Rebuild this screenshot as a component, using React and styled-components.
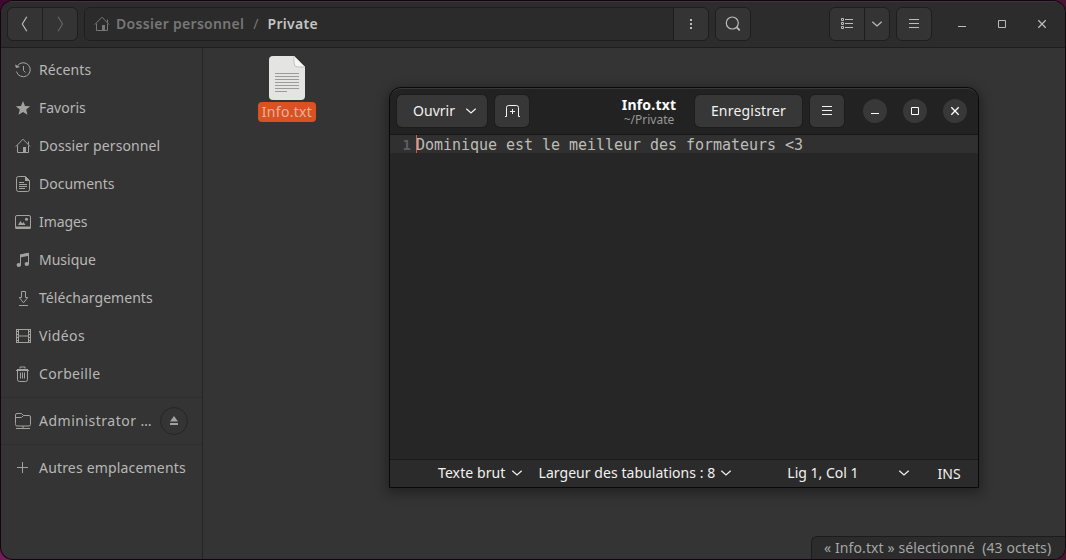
import React from "react";
import styled, { createGlobalStyle } from "styled-components";

const Global = createGlobalStyle`
  * { box-sizing: border-box; }
  html, body { margin: 0; height: 100%; overflow: hidden; }
  body { font-family: "Noto Sans", "Open Sans", sans-serif; font-size: 14px; }
`;

const Desktop = styled.div`
  width: 1066px;
  height: 560px;
  overflow: hidden;
  padding: 1px;
  background: linear-gradient(100deg, #3c0a30 0%, #7a2160 10%, #4a1238 50%, #481530 100%);
`;

const FilesWindow = styled.div`
  position: relative;
  display: flex;
  flex-direction: column;
  height: 558px;
  border-radius: 12px;
  overflow: hidden;
  background: #343434;
  color: #b4b4b2;
  box-shadow: 0 0 0 1px #17030f;
`;

const FilesHeader = styled.header`
  display: flex;
  align-items: flex-start;
  height: 47px;
  padding: 6px 11px 0 6px;
  background: #2c2c2c;
  border-top: 1px solid #383838;
  border-bottom: 1px solid #1d1d1d;
`;

const Group = styled.div`
  display: flex;
  height: 34px;
  margin-top: -1px;
  margin-right: ${(p) => p.$gap || 6}px;
  border: 1px solid #1e1e1e;
  border-radius: 6px;
  overflow: hidden;
  background: #343434;
`;

const Cell = styled.div`
  display: flex;
  align-items: center;
  justify-content: center;
  width: ${(p) => p.$w}px;
  color: ${(p) => (p.$dim ? "#646464" : "#bcbcba")};
  & + & { border-left: 1px solid #1e1e1e; }
`;

const PathBar = styled.div`
  display: flex;
  align-items: center;
  width: 589px;
  padding-left: 9px;
  background: #2b2b2b;
  border-right: 1px solid #1e1e1e;
  color: #777775;
  font-weight: 600;
`;

const Label = styled.span`
  white-space: pre;
  letter-spacing: ${(p) => p.$ls || 0}px;
  margin-left: ${(p) => p.$ml || 0}px;
  color: ${(p) => p.$color || "inherit"};
  font-weight: ${(p) => p.$weight || "inherit"};
  line-height: 20px;
`;

const Spacer = styled.div`
  flex: 1;
`;

const WindowButtons = styled.div`
  display: flex;
  gap: 16px;
  margin-top: ${(p) => p.$top || 0}px;
`;

const WindowButton = styled.div`
  display: flex;
  align-items: center;
  justify-content: center;
  width: 24px;
  height: 24px;
  border-radius: 50%;
  background: ${(p) => (p.$filled ? "#383838" : "transparent")};
  color: ${(p) => (p.$filled ? "#fff" : "#bcbcba")};
`;

const FilesBody = styled.div`
  display: flex;
  flex: 1;
`;

const Sidebar = styled.nav`
  width: 202px;
  padding-top: 3px;
  border-right: 1px solid #242424;
`;

const Place = styled.div`
  display: flex;
  align-items: center;
  height: 38px;
  padding: 0 14px;
  color: #a2a2a0;
`;

const Rule = styled.div`
  height: 1px;
  margin: 4px 0;
  background: #2e2e2e;
`;

const Eject = styled.div`
  display: flex;
  align-items: center;
  justify-content: center;
  width: 28px;
  height: 28px;
  margin-left: auto;
  border: 1px solid #252525;
  border-radius: 50%;
`;

const Content = styled.main`
  flex: 1;
  padding: 8px 0 0 55px;
`;

const FileItem = styled.div`
  display: flex;
  flex-direction: column;
  align-items: center;
  width: 58px;
`;

const FileName = styled.div`
  width: 58px;
  height: 20px;
  margin-top: 1px;
  border-radius: 4px;
  background: #dc5121;
  color: #e3b3a0;
  text-align: center;
  line-height: 20px;
  letter-spacing: 0.3px;
`;

const Floating = styled.div`
  position: absolute;
  right: 0;
  bottom: 0;
  width: 254px;
  height: 23px;
  padding: 1px 0 0 12px;
  border: solid #1c1c1c;
  border-width: 1px 0 0 1px;
  border-radius: 6px 0 0 0;
  background: #2c2c2c;
  color: #a6a6a4;
`;

const Editor = styled.section`
  position: absolute;
  left: 388px;
  top: 86px;
  display: flex;
  flex-direction: column;
  width: 590px;
  height: 401px;
  border: 1px solid #090909;
  border-radius: 12px 12px 0 0;
  overflow: hidden;
  background: #262626;
  color: #f2f2f0;
  box-shadow: 0 3px 12px 2px rgba(0, 0, 0, 0.36);
`;

const EditorHeader = styled.header`
  display: flex;
  align-items: center;
  height: 47px;
  padding: 0 11px 1px 7px;
  background: #222;
  border-top: 1px solid #373737;
  border-bottom: 1px solid #161616;
  border-radius: 11px 11px 0 0;
`;

const Button = styled.div`
  display: flex;
  align-items: center;
  justify-content: center;
  width: ${(p) => p.$w}px;
  height: 32px;
  margin-right: ${(p) => p.$gap || 8}px;
  padding-left: ${(p) => p.$pad || 0}px;
  border-radius: 5px;
  background: #373737;
  box-shadow: 0 0 0 1px #1c1c1c;
`;

const Title = styled.div`
  display: flex;
  flex-direction: column;
  align-items: center;
  flex: 1;
  padding-left: 73px;
`;

const TitleName = styled.div`
  font-weight: 700;
  line-height: 17px;
  color: #fff;
  letter-spacing: 0.2px;
`;

const TitlePath = styled.div`
  font-size: 12px;
  line-height: 14px;
  color: #989896;
`;

const TextArea = styled.div`
  flex: 1;
  font-family: "DejaVu Sans Mono", monospace;
  font-size: 15px;
`;

const Line = styled.div`
  display: flex;
  height: 18px;
  line-height: 20px;
  background: #303030;
  color: #bdbdb8;
  letter-spacing: -0.03px;
`;

const LineNumber = styled.div`
  width: 26px;
  padding-right: 5px;
  text-align: right;
  font-weight: 700;
  font-size: 14px;
  color: #5e5c64;
`;

const Caret = styled.span`
  width: 1px;
  margin-right: -1px;
  background: #e95420;
`;

const EditorStatus = styled.footer`
  display: flex;
  align-items: center;
  height: 28px;
  padding: 0 0 2px 48px;
  border-top: 1px solid #1a1a1a;
  background: #2b2b2b;
`;

const InsertMode = styled(Label)`
  padding-top: 2px;
`;

const Svg = ({ w = 16, h = 16, ml = 0, children }) => (
  <svg width={w} height={h} viewBox={`0 0 ${w} ${h}`} fill="none" stroke="currentColor" strokeWidth="1" style={{ flex: "none", marginLeft: ml }}>
    {children}
  </svg>
);

const Home = () => (
  <Svg>
    <path d="M.8 8.6 8 1.2l7.2 7.4M2.5 7.5v7h11v-7M13.5 6.5v-3" />
    <path d="M8 9h3v6H8z" fill="currentColor" stroke="none" />
  </Svg>
);
const Down = ({ ml }) => (
  <Svg w={12} h={8} ml={ml}><path d="M1.3 1.7 6 6l4.7-4.3" strokeWidth="1.2" /></Svg>
);
const Menu = () => (
  <Svg><path d="M3 3.5h10M3 7.5h10M3 11.5h10" /></Svg>
);
const Minimize = () => (<Svg><path d="M4 10.5h8" /></Svg>);
const Maximize = () => (<Svg><path d="M4.5 4.5h7v7h-7z" /></Svg>);
const Close = () => (<Svg><path d="m4.3 4.3 7.4 7.4M11.7 4.3l-7.4 7.4" strokeWidth="1.3" /></Svg>);

const icons = {
  recent: (
    <Svg>
      <path d="M2.6 3.6A7 7 0 1 1 1.5 9.6M8.5 4v4.5l2 2" />
      <path d="M0 2.5 1 6 5 5z" fill="currentColor" stroke="none" />
    </Svg>
  ),
  star: (
    <Svg><path d="M8 1l2 4.9 5.2.3-4 3.4 1.3 5.1L8 11.9l-4.5 2.8 1.3-5.1-4-3.4L6 5.9z" fill="currentColor" stroke="none" /></Svg>
  ),
  home: <Home />,
  doc: (
    <Svg>
      <path d="M3.500.5h7l4 4v9a2 2 0 0 1-2 2h-9a2 2 0 0 1-2-2v-11a2 2 0 0 1 2-2M4 6.500h5M4 8.500h8M4 10.500h8M4 12.500h6" />
      <path d="M10 0v5h5z" fill="currentColor" stroke="none" />
    </Svg>
  ),
  image: (
    <Svg>
      <rect x=".5" y="1.500" width="15" height="12.500" rx="1.500" />
      <path d="M0 12.500h16v1a1.500 1.500 0 0 1-1.500 1.500h-13A1.500 1.500 0 0 1 0 13.500zM3 11l2.500-4 1.700 2.500L8.500 8l2 3z" fill="currentColor" stroke="none" />
      <circle cx="11.500" cy="5.200" r="1.500" fill="currentColor" stroke="none" />
    </Svg>
  ),
  music: (
    <Svg>
      <path d="M5.500 13V3l8-1.500V12" />
      <path d="M5 2.500 14 .8v3L5 5.500z" fill="currentColor" stroke="none" />
      <ellipse cx="3.800" cy="13" rx="2.200" ry="1.900" fill="currentColor" stroke="none" />
      <ellipse cx="11.800" cy="12" rx="2.200" ry="1.900" fill="currentColor" stroke="none" />
    </Svg>
  ),
  download: (
    <Svg><path d="M6.500 1.500h4v6h2.200L8.500 12.800 4.300 7.500h2.200zM4 15.500h9" /></Svg>
  ),
  video: (
    <Svg>
      <path d="M3.500 1.500v13M13.500 1.500v13M1 1.500h15M1 14.500h15M3.500 8h10" />
      <path d="M1.500 1v14M15.500 1v14" />
      <path d="M2.500 3v11M14.500 3v11" strokeDasharray="1 2" />
    </Svg>
  ),
  trash: (
    <Svg>
      <path d="M2.500 5v8.500a2 2 0 0 0 2 2h6a2 2 0 0 0 2-2V5M5.500 6.500v6M7.500 6.500v6M9.500 6.500v6M5 2.500v-1.500h5v1.500" />
      <path d="M1 4.500h13M2 3.500h11" />
    </Svg>
  ),
  remote: (
    <Svg>
      <path d="M.5 10.500V2A1.500 1.500 0 0 1 2 .5h4.500l2 2h5.500a1.500 1.500 0 0 1 1.500 1.500v7.500a1.500 1.500 0 0 1-1.500 1.500H2a1.500 1.500 0 0 1-1.500-1.500zM.5 4.500h6l2-2M1 15.500h14M8 13v2" />
    </Svg>
  ),
  plus: (<Svg><path d="M2 7.500h11M7.500 2v11" /></Svg>),
};

const places = [
  ["recent", "Récents", 0.1],
  ["star", "Favoris", 0],
  ["home", "Dossier personnel", 0.12],
  ["doc", "Documents", 0],
  ["image", "Images", -0.1],
  ["music", "Musique", 0],
  ["download", "Téléchargements", 0.05],
  ["video", "Vidéos", 0.4],
  ["trash", "Corbeille", 0.35],
];

const PlaceRow = ({ icon, text, ls, children }) => (
  <Place>
    {icons[icon]}
    <Label $ml={8} $ls={ls} $color="#b8b8b6">{text}</Label>
    {children}
  </Place>
);

export default function App() {
  return (
    <Desktop>
      <Global />
      <FilesWindow>
        <FilesHeader>
          <Group>
            <Cell $w={34}><Svg><path d="M9.800.8 5.300 8l4.500 7.200" strokeWidth="1.200" /></Svg></Cell>
            <Cell $w={35} $dim><Svg><path d="M6 .8 10.500 8 6 15.200" strokeWidth="1.200" /></Svg></Cell>
          </Group>
          <Group>
            <PathBar>
              <Home />
              <Label $ml={6} $ls={0.3}>Dossier personnel</Label>
              <Label $ml={9} $weight={400}>/</Label>
              <Label $ml={9} $ls={0.3} $color="#c4c4c2">Private</Label>
            </PathBar>
            <Cell $w={34}>
              <Svg><path d="M7 3h2v2H7zM7 7h2v2H7zM7 11h2v2H7z" fill="currentColor" stroke="none" /></Svg>
            </Cell>
          </Group>
          <Group>
            <Cell $w={34}>
              <Svg><circle cx="7.300" cy="7" r="6" strokeWidth="1.200" /><path d="m11.500 11.200 3.200 3.200" strokeWidth="1.800" /></Svg>
            </Cell>
          </Group>
          <Spacer />
          <Group>
            <Cell $w={34}>
              <Svg><path d="M2.500 2.500h2v2h-2zM2.500 6.500h2v2h-2zM2.500 10.500h2v2h-2zM6 3.500h8M6 7.500h8M6 11.500h8" /></Svg>
            </Cell>
            <Cell $w={25}><Down /></Cell>
          </Group>
          <Group $gap={18}><Cell $w={34}><Menu /></Cell></Group>
          <WindowButtons $top={4}>
            <WindowButton><Minimize /></WindowButton>
            <WindowButton><Maximize /></WindowButton>
            <WindowButton><Close /></WindowButton>
          </WindowButtons>
        </FilesHeader>

        <FilesBody>
          <Sidebar>
            {places.map(([icon, text, ls]) => (
              <PlaceRow key={icon} icon={icon} text={text} ls={ls} />
            ))}
            <Rule />
            <PlaceRow icon="remote" text="Administrator …" ls={0.5}>
              <Eject><Svg><path d="M8 3l4 5.500H4zM4 10h8v2H4z" fill="currentColor" stroke="none" /></Svg></Eject>
            </PlaceRow>
            <Rule />
            <PlaceRow icon="plus" text="Autres emplacements" ls={0.18} />
          </Sidebar>
          <Content>
            <FileItem>
              <svg width="38" height="45" viewBox="0 0 38 45">
                <path d="M5 0h21l11 11v29a4 4 0 0 1-4 4H5a4 4 0 0 1-4-4V4a4 4 0 0 1 4-4z" fill="#e4e4e3" />
                <path d="M26 0v7a4 4 0 0 0 4 4h7z" fill="#f6f6f5" stroke="#c2c2bf" />
                <path d="M7 17.500h24M7 20.500h24M7 23.500h24M7 26.500h24M7 29.500h24M7 32.500h24M7 35.500h12" stroke="#9b9b99" />
              </svg>
              <FileName>Info.txt</FileName>
            </FileItem>
          </Content>
        </FilesBody>

        <Floating><Label $ls={0.1}>« Info.txt » sélectionné  (43 octets)</Label></Floating>

        <Editor>
          <EditorHeader>
            <Button $w={90} $pad={6}>
              <Label>Ouvrir</Label>
              <Down ml={10} />
            </Button>
            <Button $w={34} $gap={1}>
              <Svg><path d="M1 13.500h1.500v-9a2 2 0 0 1 2-2h8a2 2 0 0 1 2 2v9H16M8.500 6v5M6 8.500h5" /></Svg>
            </Button>
            <Title>
              <TitleName>Info.txt</TitleName>
              <TitlePath>~/Private</TitlePath>
            </Title>
            <Button $w={107}><Label $ls={0.2}>Enregistrer</Label></Button>
            <Button $w={34} $gap={19}><Menu /></Button>
            <WindowButtons>
              <WindowButton $filled><Minimize /></WindowButton>
              <WindowButton $filled><Maximize /></WindowButton>
              <WindowButton $filled><Close /></WindowButton>
            </WindowButtons>
          </EditorHeader>
          <TextArea>
            <Line>
              <LineNumber>1</LineNumber>
              <Caret />
              <span>Dominique est le meilleur des formateurs &lt;3</span>
            </Line>
          </TextArea>
          <EditorStatus>
            <Label $ls={0.1}>Texte brut</Label>
            <Down ml={5} />
            <Label $ml={16} $ls={0.05}>Largeur des tabulations : 8</Label>
            <Down ml={5} />
            <Label $ml={55}>Lig 1, Col 1</Label>
            <Down ml={39} />
            <InsertMode $ml={28}>INS</InsertMode>
          </EditorStatus>
        </Editor>
      </FilesWindow>
    </Desktop>
  );
}
